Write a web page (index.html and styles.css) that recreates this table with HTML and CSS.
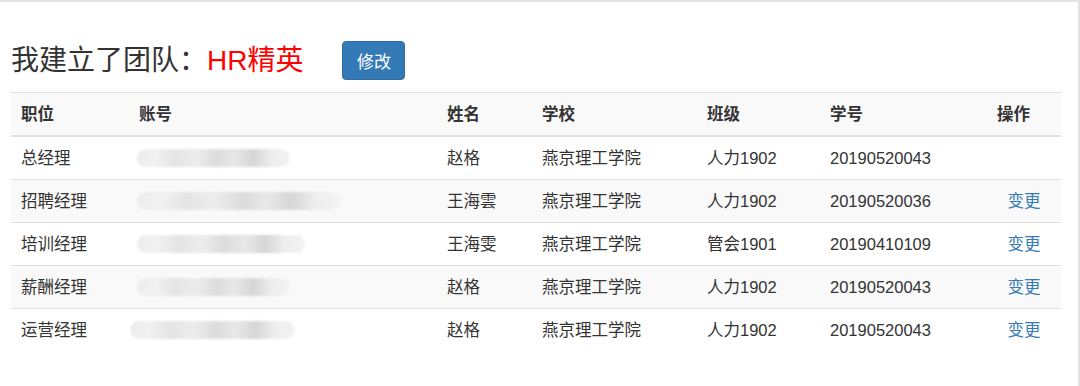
FILE: index.html
```html
<!DOCTYPE html>
<html>
<head>
<meta charset="utf-8">
<link rel="stylesheet" href="styles.css">
</head>
<body>
<div class="frame">
  <div class="title-row">
    <h3 class="title">我建立了团队：<span class="team">HR精英</span></h3>
    <button class="btn">修改</button>
  </div>
  <table class="tbl">
    <colgroup>
      <col class="c1"><col class="c2"><col class="c3"><col class="c4"><col class="c5"><col class="c6"><col class="c7">
    </colgroup>
    <thead>
      <tr><th>职位</th><th>账号</th><th>姓名</th><th>学校</th><th>班级</th><th>学号</th><th>操作</th></tr>
    </thead>
    <tbody>
      <tr><td>总经理</td><td><div class="blur" style="width:153px"></div></td><td>赵格</td><td>燕京理工学院</td><td>人力1902</td><td>20190520043</td><td class="op"></td></tr>
      <tr><td>招聘经理</td><td><div class="blur" style="width:203px"></div></td><td>王海雲</td><td>燕京理工学院</td><td>人力1902</td><td>20190520036</td><td class="op"><a class="lnk">变更</a></td></tr>
      <tr><td>培训经理</td><td><div class="blur" style="width:168px"></div></td><td>王海雯</td><td>燕京理工学院</td><td>管会1901</td><td>20190410109</td><td class="op"><a class="lnk">变更</a></td></tr>
      <tr><td>薪酬经理</td><td><div class="blur" style="width:153px"></div></td><td>赵格</td><td>燕京理工学院</td><td>人力1902</td><td>20190520043</td><td class="op"><a class="lnk">变更</a></td></tr>
      <tr><td>运营经理</td><td><div class="blur shift" style="width:165px"></div></td><td>赵格</td><td>燕京理工学院</td><td>人力1902</td><td>20190520043</td><td class="op"><a class="lnk">变更</a></td></tr>
    </tbody>
  </table>
</div>
</body>
</html>
```

FILE: styles.css
```css
html, body {
  margin: 0;
  padding: 0;
  background: #fff;
}
body {
  font-family: "Liberation Sans", "Noto Sans CJK SC", sans-serif;
  color: #333;
}
.frame {
  width: 1080px;
  height: 386px;
  border-top: 2px solid #e2e2e2;
  border-right: 2px solid #e2e2e2;
  padding: 39px 0 0 11px;
  box-sizing: border-box;
}
.title-row {
  display: flex;
  align-items: center;
  height: 39px;
  margin-bottom: 12px;
}
.title {
  margin: 0;
  font-size: 28px;
  font-weight: normal;
  line-height: 32px;
  color: #333;
}
.team {
  color: #ff0000;
}
.btn {
  margin-left: 39px;
  width: 63px;
  height: 39px;
  background: #337ab7;
  border: 1px solid #2e6da4;
  border-radius: 4px;
  color: #fff;
  font-family: "Liberation Sans", "Noto Sans CJK SC", sans-serif;
  font-size: 17px;
  padding: 0;
}
.tbl {
  width: 1050px;
  border-collapse: collapse;
  table-layout: fixed;
  font-size: 16.5px;
}
.c1 { width: 118px; }
.c2 { width: 308px; }
.c3 { width: 95px; }
.c4 { width: 165px; }
.c5 { width: 123px; }
.c6 { width: 167px; }
.c7 { width: 74px; }
.tbl th, .tbl td {
  padding: 8px 8px 8px 10px;
  line-height: 26px;
  text-align: left;
  border-top: 1px solid #e0e0e0;
  white-space: nowrap;
  vertical-align: middle;
}
.tbl th {
  font-weight: bold;
  background: #f9f9f9;
  border-bottom: 2px solid #e0e0e0;
}
.tbl tbody tr:nth-child(even) td {
  background: #f9f9f9;
}
.tbl td.op {
  text-align: center;
  padding-left: 8px;
}
.lnk {
  color: #337ab7;
  text-decoration: none;
}
.blur {
  height: 18px;
  margin-left: -2px;
  border-radius: 9px;
  background: linear-gradient(90deg, #ececec 0%, #f1f1f1 12%, #e4e4e4 25%, #ededed 38%, #dcdcdc 52%, #e8e8e8 64%, #d6d6d6 76%, #eeeeee 88%, #f2f2f2 100%);
  filter: blur(1px);
}
.blur.shift {
  margin-left: -9px;
}
```
